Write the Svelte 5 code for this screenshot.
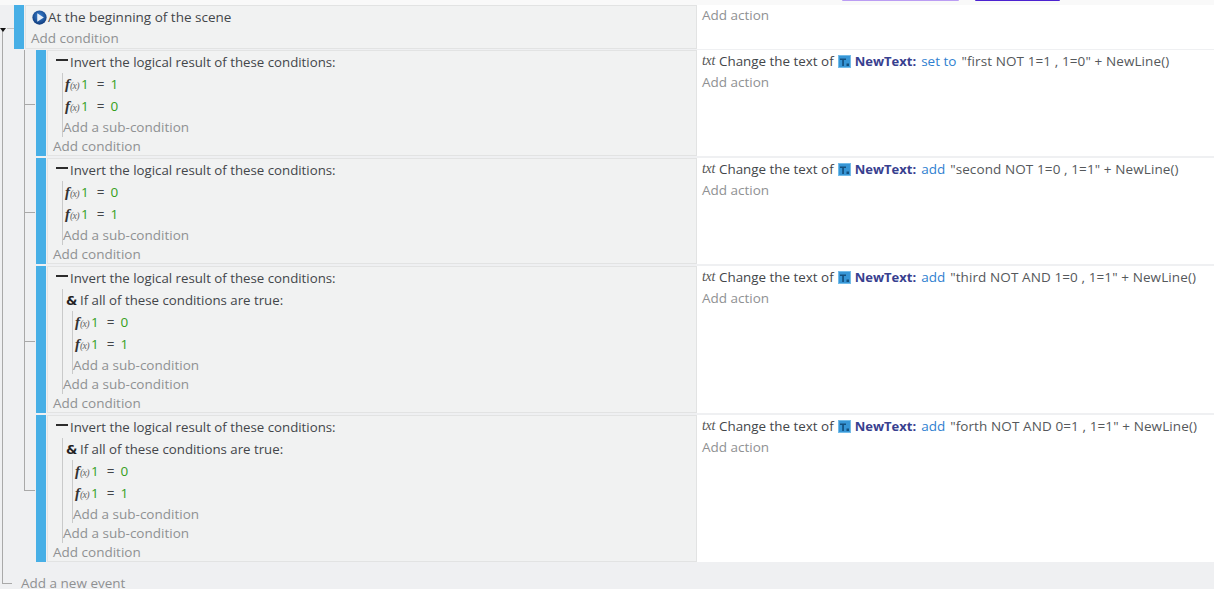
<script>
  const events = [
    { h: 106, mode: 'set to', text: '"first NOT 1=1 , 1=0" + NewLine()', nested: false, conds: [['1','1'],['1','0']], branch: 54 },
    { h: 106, mode: 'add', text: '"second NOT 1=0 , 1=1" + NewLine()', nested: false, conds: [['1','0'],['1','1']], branch: 54 },
    { h: 147, mode: 'add', text: '"third NOT AND 1=0 , 1=1" + NewLine()', nested: true, conds: [['1','0'],['1','1']], branch: 75 },
    { h: 147, mode: 'add', text: '"forth NOT AND 0=1 , 1=1" + NewLine()', nested: true, conds: [['1','0'],['1','1']], branch: 75 }
  ];
</script>

{#snippet fx()}
  <span class="fx"><b>f</b><i>(x)</i></span>
{/snippet}

{#snippet compare(c)}
  <div class="cond">{@render fx()}<span class="green">{c[0]}</span><span class="eq">=</span><span class="green">{c[1]}</span></div>
{/snippet}

<div class="page">
  <div class="top">
    <span class="pill light"></span>
    <span class="pill dark"></span>
  </div>

  <div class="tree">
    <span class="arrow"></span>
    <span class="line outer"></span>
    <span class="line outer-h"></span>
    <span class="line root-h"></span>
    <span class="line inner"></span>

    <div class="event root">
      <div class="bar"></div>
      <div class="conds">
        <div class="row head">
          <svg class="play" viewBox="0 0 16 16" width="15" height="15" aria-hidden="true">
            <defs>
              <radialGradient id="pg" cx="50%" cy="40%" r="65%">
                <stop offset="0" stop-color="#3d86d6" />
                <stop offset="1" stop-color="#0b3474" />
              </radialGradient>
            </defs>
            <circle cx="8" cy="8" r="7.6" fill="url(#pg)" />
            <path d="M5.6 3.4 12.6 8 5.6 12.6Z" fill="#e6eef8" />
          </svg>
          <span>At the beginning of the scene</span>
        </div>
        <div class="add root-add">Add condition</div>
      </div>
      <div class="acts">
        <div class="add act-add first">Add action</div>
      </div>
    </div>

    {#each events as e}
      <div class="event sub" style="height: {e.h}px">
        <span class="line branch" style="top: {e.branch}px"></span>
        <div class="bar"></div>
        <div class="conds">
          <div class="row invert"><span class="minus"></span><span class="tight">Invert the logical result of these conditions:</span></div>
          <div class="group">
            {#if e.nested}
              <div class="row all"><span class="amp">&amp;</span><span class="tight">If all of these conditions are true:</span></div>
              <div class="group inner-group">
                {#each e.conds as c}{@render compare(c)}{/each}
                <div class="add sub-add">Add a sub-condition</div>
              </div>
            {:else}
              {#each e.conds as c}{@render compare(c)}{/each}
            {/if}
            <div class="add sub-add">Add a sub-condition</div>
          </div>
          <div class="add cond-add">Add condition</div>
        </div>
        <div class="acts">
          <div class="action">
            <span class="txt">txt</span>
            <span class="change">Change the text of</span>
            <svg class="obj" viewBox="0 0 13 13" width="13" height="13" aria-hidden="true">
              <rect width="13" height="13" fill="#74bce8" />
              <rect x="1" y="1" width="11" height="11" fill="#3796d6" />
              <path d="M2 3.5h6v1.6H5.9V11H4.2V5.1H2Z" fill="#14507f" />
              <rect x="8.5" y="8.5" width="2.5" height="2.5" fill="#14507f" />
            </svg>
            <strong>NewText:</strong>
            <span class="mode">{e.mode}</span>
            <span class="value">{e.text}</span>
          </div>
          <div class="add act-add">Add action</div>
        </div>
      </div>
    {/each}

    <div class="add new-event">Add a new event</div>
  </div>
</div>

<style>
  :global(body) {
    margin: 0;
    background: #eff0f2;
  }
  .page {
    width: 1214px;
    height: 589px;
    overflow: hidden;
    background: #eff0f2;
    font-family: "Open Sans", "Liberation Sans", sans-serif;
    font-size: 13.5px;
    color: #43464a;
    position: relative;
  }
  .top {
    height: 5px;
    background: #f9f9f9;
    display: flex;
    padding-left: 842px;
    gap: 16px;
  }
  .pill {
    height: 1px;
    border-radius: 0 0 3px 3px;
  }
  .pill.light {
    width: 117px;
    background: #bb9df3;
  }
  .pill.dark {
    width: 85px;
    background: #4c22d0;
  }
  .tree {
    position: relative;
    padding-left: 14px;
  }
  .line {
    position: absolute;
    background: #a9a9a9;
  }
  .outer {
    left: 2px;
    top: 25px;
    width: 1px;
    height: 553px;
  }
  .outer-h {
    left: 2px;
    top: 578px;
    width: 10px;
    height: 1px;
  }
  .root-h {
    left: 7px;
    top: 23px;
    width: 7px;
    height: 1px;
    background: #c4c4c4;
  }
  .inner {
    left: 24px;
    top: 45px;
    width: 1px;
    height: 441px;
  }
  .arrow {
    position: absolute;
    left: 0;
    top: 23px;
    border: 3.5px solid transparent;
    border-top: 4px solid #111;
    border-bottom: 0;
    z-index: 1;
  }
  .event {
    display: flex;
    position: relative;
  }
  .root {
    height: 44px;
    margin-bottom: 1px;
  }
  .sub {
    margin: 0 0 2px 22px;
  }
  .branch {
    left: -12px;
    width: 11px;
    height: 1px;
  }
  .bar {
    width: 10px;
    flex: none;
    background: #47afe6;
  }
  .conds {
    flex: none;
    box-sizing: border-box;
    background: #f1f2f2;
    border: 1px solid #e2e3e3;
    margin-left: 1px;
    padding-left: 6px;
  }
  .root .conds {
    width: 672px;
  }
  .sub .conds {
    width: 650px;
  }
  .acts {
    flex: 1;
    background: #fff;
    padding-left: 5px;
    box-sizing: border-box;
  }
  .row {
    display: flex;
    align-items: center;
    white-space: nowrap;
  }
  .head {
    height: 22px;
    gap: 1px;
  }
  .add {
    color: #8f9193;
    line-height: 19px;
    white-space: nowrap;
  }
  .root-add {
    margin-left: -1px;
    padding-top: 1px;
    line-height: 19px;
  }
  .invert {
    height: 22px;
    padding-left: 2px;
    gap: 2px;
  }
  .tight {
    font-size: 13.25px;
  }
  .minus {
    width: 12px;
    height: 2px;
    background: #2c2c2c;
    margin-top: -5px;
  }
  .group {
    margin-left: 8px;
    border-left: 1px solid #c9caca;
  }
  .inner-group {
    margin-left: 9px;
  }
  .cond {
    height: 22px;
    display: flex;
    align-items: center;
    padding-left: 2px;
    white-space: nowrap;
  }
  .all {
    height: 22px;
    padding-left: 3px;
    gap: 4px;
  }
  .amp {
    font-family: "DejaVu Sans", sans-serif;
    font-weight: 700;
    font-size: 13px;
    color: #222;
    width: 10px;
    line-height: 1;
  }
  .fx {
    width: 16px;
    display: inline-flex;
    align-items: baseline;
    font-family: "Liberation Serif", serif;
    color: #333;
    flex: none;
  }
  .fx b {
    font-style: italic;
    font-size: 15px;
  }
  .fx i {
    font-size: 10px;
    letter-spacing: -0.8px;
    color: #666;
  }
  .green {
    color: #35a01c;
  }
  .eq {
    margin: 0 6px 0 8px;
  }
  .sub-add {
    padding-top: 1px;
    line-height: 19px;
  }
  .inner-group .sub-add {
    line-height: 18px;
  }
  .cond-add {
    margin-left: -1px;
    line-height: 19px;
  }
  .action {
    height: 22px;
    display: flex;
    align-items: center;
    white-space: nowrap;
    gap: 4px;
  }
  .txt {
    font-family: "Liberation Serif", serif;
    font-style: italic;
    font-size: 14px;
    width: 13px;
    letter-spacing: -0.3px;
    color: #555;
  }
  .change {
    font-size: 13.4px;
  }
  strong {
    font-size: 13px;
    color: #38408f;
    font-weight: 700;
    margin-right: 1px;
  }
  .mode {
    color: #2f7fd0;
    margin-right: 1px;
  }
  .value {
    color: #55585b;
    letter-spacing: 0.1px;
  }
  .act-add {
    line-height: 20px;
  }
  .first {
    line-height: 21px;
  }
  .new-event {
    position: absolute;
    left: 21px;
    top: 569px;
  }
</style>
